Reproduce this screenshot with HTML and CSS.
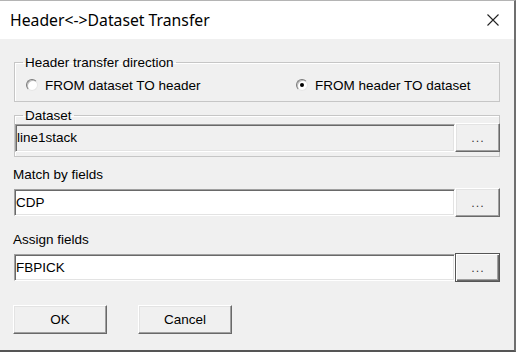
FILE: index.html
```html
<!DOCTYPE html>
<html lang="en">
<head>
  <meta charset="UTF-8">
  <title>Header&lt;-&gt;Dataset Transfer</title>
  <link rel="stylesheet" href="styles.css">
</head>
<body>
  <div class="window">
    <div class="titlebar">
      <span class="title">Header&lt;-&gt;Dataset Transfer</span>
      <svg class="close" width="12" height="12" viewBox="0 0 12 12">
        <path d="M0.5 0.5 L11.5 11.5 M11.5 0.5 L0.5 11.5" stroke="#222" stroke-width="1.1" fill="none"/>
      </svg>
    </div>

    <div class="dialog">
      <fieldset class="group direction">
        <legend>Header transfer direction</legend>
        <div class="radios">
          <label class="radio-item"><span class="radio"></span>FROM dataset TO header</label>
          <label class="radio-item"><span class="radio checked"></span>FROM header TO dataset</label>
        </div>
      </fieldset>

      <fieldset class="group dataset">
        <legend>Dataset</legend>
        <div class="field-row in-group">
          <div class="textbox readonly">line1stack</div>
          <button class="browse">...</button>
        </div>
      </fieldset>

      <div class="field-label first">Match by fields</div>
      <div class="field-row">
        <div class="textbox">CDP</div>
        <button class="browse">...</button>
      </div>

      <div class="field-label">Assign fields</div>
      <div class="field-row">
        <div class="textbox">FBPICK</div>
        <button class="browse default">...</button>
      </div>

      <div class="actions">
        <button class="btn">OK</button>
        <button class="btn">Cancel</button>
      </div>
    </div>
  </div>
</body>
</html>
```

FILE: styles.css
```css
* {
  margin: 0;
  padding: 0;
  box-sizing: border-box;
}

body {
  background-color: #fff;
}

.window {
  width: 516px;
  height: 352px;
  display: flex;
  flex-direction: column;
  border-top: 1px solid #b4b4b4;
  border-right: 2px solid #6f6f6f;
  border-bottom: 2px solid #555;
  background-color: #f0f0f0;
  font-family: 'Liberation Sans', Arial, sans-serif;
  font-size: 13.5px;
  color: #000;
}

.titlebar {
  height: 38px;
  background-color: #fff;
  display: flex;
  align-items: center;
  justify-content: space-between;
  padding: 0 15px 0 10px;
}

.title {
  font-family: 'Noto Sans', sans-serif;
  font-size: 15.75px;
  color: #000;
}

.close {
  display: block;
}

.dialog {
  flex: 1;
  padding: 16px 14px 0 13px;
}

/* group boxes */
.group {
  margin: 0 0 0 1px;
  padding: 0;
  border: 1px solid #c6c6c6;
  box-shadow: inset 1px 1px 0 #fff;
}

.group legend {
  margin-left: 8px;
  padding: 0 2px;
  line-height: 15px;
}

.radios {
  display: grid;
  grid-template-columns: 270px auto;
  align-items: center;
  height: 30px;
  padding-left: 11px;
  margin-bottom: 1px;
}

.radio-item {
  display: flex;
  align-items: center;
  gap: 7px;
}

.radio {
  width: 12px;
  height: 12px;
  border-radius: 50%;
  background-color: #fff;
  border: 1px solid;
  border-color: #7a7a7a #e6e6e6 #e6e6e6 #7a7a7a;
  box-shadow: inset 1px 1px 0 #bdbdbd;
  display: flex;
  align-items: center;
  justify-content: center;
}

.radio.checked::after {
  content: "";
  width: 4px;
  height: 4px;
  border-radius: 50%;
  background-color: #000;
}

.dataset {
  margin-top: 6px;
  padding-bottom: 4px;
}

/* text fields */
.field-label {
  line-height: 15px;
  margin-top: 15px;
}

.field-label.first {
  margin-top: 10px;
}

.field-row {
  display: flex;
  align-items: center;
  margin-top: 6px;
  margin-left: 1px;
}

.field-row.in-group {
  margin: 0 -1px 0 0;
}

.textbox {
  flex: 1;
  height: 27px;
  line-height: 23px;
  padding-left: 1px;
  background-color: #fff;
  border: 1px solid;
  border-color: #a0a0a0 #fff #fff #a0a0a0;
  box-shadow: inset 1px 1px 0 #696969, inset -1px -1px 0 #e3e3e3;
  padding-top: 1px;
  white-space: nowrap;
}

.textbox.readonly {
  background-color: #f0f0f0;
  height: 28px;
}

/* buttons */
button {
  font-family: 'Liberation Sans', Arial, sans-serif;
  font-size: 13.5px;
  color: #000;
  background-color: #f0f0f0;
  border: 1px solid;
  border-color: #fff #696969 #696969 #fff;
  box-shadow: inset -1px -1px 0 #a0a0a0, inset 1px 1px 0 #e3e3e3;
}

.browse {
  width: 45px;
  height: 29px;
  padding-top: 2px;
  font-family: 'DejaVu Sans', sans-serif;
  font-size: 11px;
  letter-spacing: 1px;
  text-indent: 1px;
  color: #333;
}

.browse.default {
  border: 1px solid #555;
  box-shadow: inset 1px 1px 0 #fff, inset -1px -1px 0 #696969, inset -2px -2px 0 #a0a0a0;
}

.actions {
  display: flex;
  gap: 31px;
  margin-top: 23px;
}

.btn {
  width: 94px;
  height: 29px;
}
```
